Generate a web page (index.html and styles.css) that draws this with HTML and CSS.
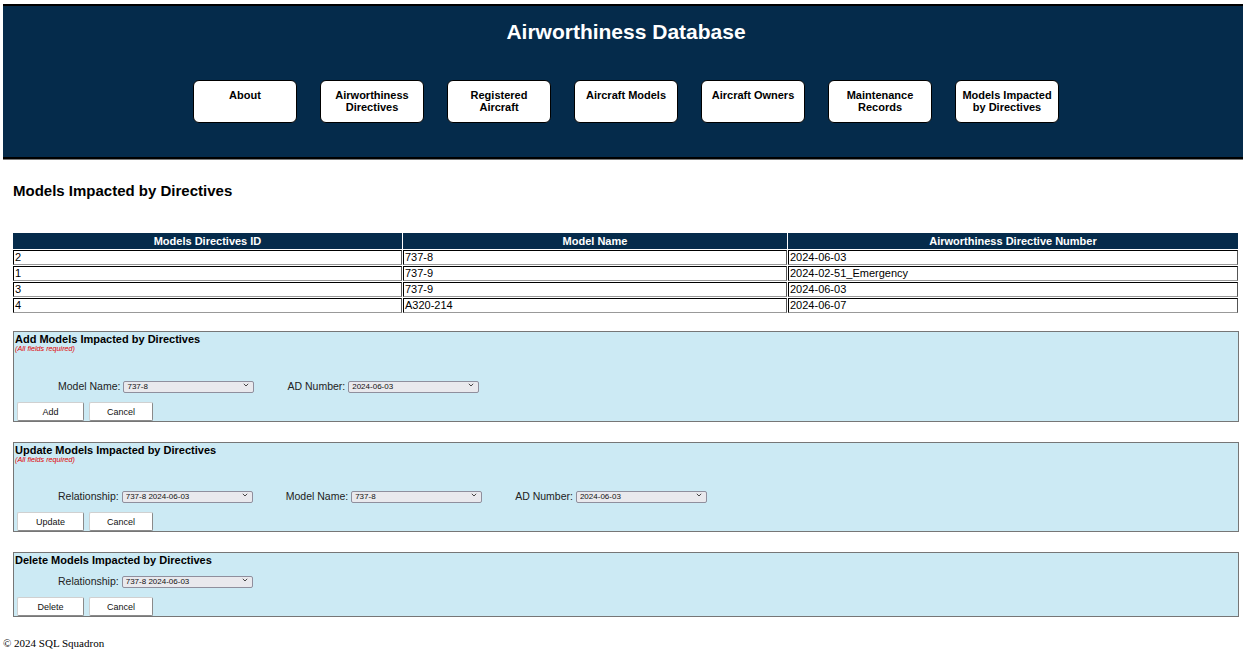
FILE: index.html
```html
<!DOCTYPE html>
<html lang="en">
<head>
<meta charset="utf-8">
<title>Models Impacted by Directives</title>
<link rel="stylesheet" href="styles.css">
</head>
<body>
<header class="site-header">
  <h1 class="site-title">Airworthiness Database</h1>
  <nav class="nav">
    <a class="nav-btn" href="#">About</a>
    <a class="nav-btn" href="#">Airworthiness<br>Directives</a>
    <a class="nav-btn" href="#">Registered<br>Aircraft</a>
    <a class="nav-btn" href="#">Aircraft Models</a>
    <a class="nav-btn" href="#">Aircraft Owners</a>
    <a class="nav-btn" href="#">Maintenance<br>Records</a>
    <a class="nav-btn" href="#">Models Impacted<br>by Directives</a>
  </nav>
</header>

<main class="main">
  <h2 class="page-title">Models Impacted by Directives</h2>

  <table class="data-table">
    <colgroup>
      <col class="c1"><col class="c2"><col class="c3">
    </colgroup>
    <thead>
      <tr><th>Models Directives ID</th><th>Model Name</th><th>Airworthiness Directive Number</th></tr>
    </thead>
    <tbody>
      <tr><td>2</td><td>737-8</td><td>2024-06-03</td></tr>
      <tr><td>1</td><td>737-9</td><td>2024-02-51_Emergency</td></tr>
      <tr><td>3</td><td>737-9</td><td>2024-06-03</td></tr>
      <tr><td>4</td><td>A320-214</td><td>2024-06-07</td></tr>
    </tbody>
  </table>

  <form class="panel">
    <div class="panel-title">Add Models Impacted by Directives</div>
    <div class="panel-note">(All fields required)</div>
    <div class="field-row gap-big">
      <label class="field"><span class="lbl">Model Name:</span>
        <span class="sel-wrap"><select class="sel"><option>737-8</option></select><svg class="chev" viewBox="0 0 6 4" width="6" height="4"><path d="M0.8 0.8 L3 3 L5.2 0.8" fill="none" stroke="#333" stroke-width="0.9"/></svg></span>
      </label>
      <label class="field"><span class="lbl">AD Number:</span>
        <span class="sel-wrap"><select class="sel"><option>2024-06-03</option></select><svg class="chev" viewBox="0 0 6 4" width="6" height="4"><path d="M0.8 0.8 L3 3 L5.2 0.8" fill="none" stroke="#333" stroke-width="0.9"/></svg></span>
      </label>
    </div>
    <div class="btn-row">
      <button type="button" class="btn btn-wide">Add</button>
      <button type="button" class="btn">Cancel</button>
    </div>
  </form>

  <form class="panel">
    <div class="panel-title">Update Models Impacted by Directives</div>
    <div class="panel-note">(All fields required)</div>
    <div class="field-row gap-mid">
      <label class="field"><span class="lbl">Relationship:</span>
        <span class="sel-wrap"><select class="sel"><option>737-8 2024-06-03</option></select><svg class="chev" viewBox="0 0 6 4" width="6" height="4"><path d="M0.8 0.8 L3 3 L5.2 0.8" fill="none" stroke="#333" stroke-width="0.9"/></svg></span>
      </label>
      <label class="field"><span class="lbl">Model Name:</span>
        <span class="sel-wrap"><select class="sel"><option>737-8</option></select><svg class="chev" viewBox="0 0 6 4" width="6" height="4"><path d="M0.8 0.8 L3 3 L5.2 0.8" fill="none" stroke="#333" stroke-width="0.9"/></svg></span>
      </label>
      <label class="field"><span class="lbl">AD Number:</span>
        <span class="sel-wrap"><select class="sel"><option>2024-06-03</option></select><svg class="chev" viewBox="0 0 6 4" width="6" height="4"><path d="M0.8 0.8 L3 3 L5.2 0.8" fill="none" stroke="#333" stroke-width="0.9"/></svg></span>
      </label>
    </div>
    <div class="btn-row">
      <button type="button" class="btn btn-wide">Update</button>
      <button type="button" class="btn">Cancel</button>
    </div>
  </form>

  <form class="panel">
    <div class="panel-title">Delete Models Impacted by Directives</div>
    <div class="field-row gap-small">
      <label class="field"><span class="lbl">Relationship:</span>
        <span class="sel-wrap"><select class="sel"><option>737-8 2024-06-03</option></select><svg class="chev" viewBox="0 0 6 4" width="6" height="4"><path d="M0.8 0.8 L3 3 L5.2 0.8" fill="none" stroke="#333" stroke-width="0.9"/></svg></span>
      </label>
    </div>
    <div class="btn-row">
      <button type="button" class="btn btn-wide">Delete</button>
      <button type="button" class="btn">Cancel</button>
    </div>
  </form>
</main>

<footer class="footer">&copy; 2024 SQL Squadron</footer>
</body>
</html>
```

FILE: styles.css
```css
* { box-sizing: border-box; }

body {
  margin: 0;
  font-family: "Liberation Sans", Arial, sans-serif;
  color: #000;
  background: #fff;
}

.site-header {
  margin: 4px 1px 0 3px;
  background: #052b4b;
  border-top: 2px solid #000;
  border-bottom: 2px solid #000;
  box-shadow: 0 1px 0 #7a7a7a;
  padding: 14px 0 33px;
  height: 155px;
}

.site-title {
  margin: 0;
  padding-left: 6px;
  text-align: center;
  color: #fff;
  font-size: 21px;
  line-height: 24px;
  font-weight: bold;
}

.nav {
  margin-top: 36px;
  display: flex;
  justify-content: center;
  gap: 23px;
  padding-left: 6px;
}

.nav-btn {
  width: 104px;
  height: 43px;
  background: #fff;
  border: 1.5px solid #000;
  border-radius: 6px;
  color: #000;
  text-decoration: none;
  font-size: 11px;
  font-weight: bold;
  line-height: 12px;
  text-align: center;
  padding-top: 8px;
}

.main {
  padding-left: 13px;
  padding-right: 5px;
}

.page-title {
  margin: 0;
  padding-top: 22px;
  font-size: 15px;
  line-height: 20px;
  font-weight: bold;
  height: 73px;
}

.data-table {
  width: 1227px;
  margin-left: -1px;
  border-collapse: separate;
  border-spacing: 1px;
  table-layout: fixed;
  font-size: 11px;
  line-height: 13px;
}

.c1 { width: 389px; }
.c2 { width: 384px; }

.data-table th {
  background: #052b4b;
  color: #fff;
  font-weight: bold;
  padding: 1px 1px 0;
  height: 15px;
  border: 1px solid #052b4b;
}

.data-table td {
  padding: 0 1px;
  height: 15px;
  border: 1px solid;
  border-color: #000 #555 #999 #000;
  text-align: left;
}

.panel {
  margin: 17px 0 0;
  width: 1226px;
  background: #cceaf4;
  border: 1px solid #767676;
  padding: 1px 0 0 1px;
}

.panel + .panel { margin-top: 20px; }

.panel-title {
  font-size: 11px;
  font-weight: bold;
  line-height: 12px;
}

.panel-note {
  color: #e00000;
  font-style: italic;
  font-size: 7.2px;
  line-height: 8px;
}

.field-row {
  display: flex;
  align-items: center;
  gap: 33px;
  padding-left: 43px;
  height: 13px;
}

.gap-big { margin-top: 26px; }
.gap-mid { margin-top: 25px; }
.gap-small { margin-top: 8px; }

.field {
  display: flex;
  align-items: center;
  gap: 3px;
  font-size: 10.5px;
  color: #222;
}

.lbl { white-space: nowrap; }

.sel-wrap {
  position: relative;
  display: inline-block;
}

.sel {
  appearance: none;
  -webkit-appearance: none;
  width: 131px;
  height: 12px;
  margin: 0;
  padding: 0 0 0 3px;
  border: 1px solid #8f8f9d;
  border-radius: 2px;
  background: #e9e9ed;
  font-family: "Liberation Sans", Arial, sans-serif;
  font-size: 8px;
  line-height: 10px;
  color: #111;
}

.chev {
  position: absolute;
  right: 5px;
  top: 4px;
  pointer-events: none;
}

.btn-row {
  display: flex;
  gap: 5px;
  margin-top: 10px;
  padding-left: 2px;
}

.btn {
  width: 64px;
  height: 19px;
  margin: 0;
  padding: 0;
  background: #fff;
  border: 1px solid #d0d0d0;
  border-right-color: #8a8a8a;
  border-bottom-color: #8a8a8a;
  border-radius: 2px;
  font-family: "Liberation Sans", Arial, sans-serif;
  font-size: 9px;
  color: #111;
}

.btn-wide { width: 67px; }

.footer {
  font-family: "Liberation Serif", "Times New Roman", serif;
  font-size: 11px;
  line-height: 14px;
  padding: 19px 0 0 3px;
}
```
